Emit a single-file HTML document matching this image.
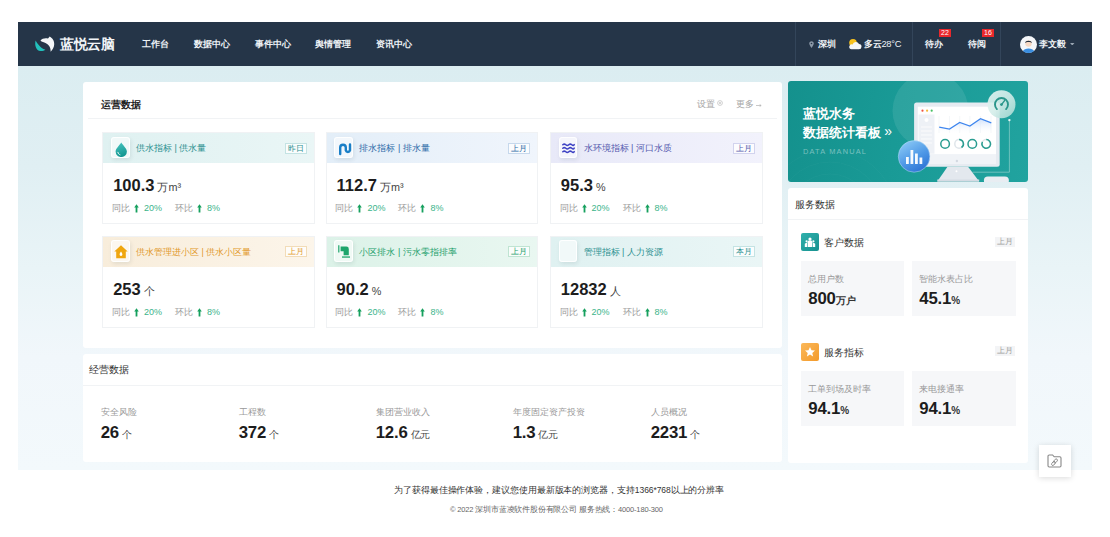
<!DOCTYPE html>
<html><head><meta charset="utf-8">
<style>
*{margin:0;padding:0;box-sizing:border-box}
html,body{width:1110px;height:537px;overflow:hidden;background:#fff;font-family:"Liberation Sans",sans-serif;color:#333}
.a{position:absolute}
#hdr{left:18px;top:22px;width:1074px;height:44px;background:#253548}
.nav{top:37px;font-size:9.3px;font-weight:bold;color:#eef2f6;line-height:12px;white-space:nowrap}
.vd{top:0;width:1px;height:44px;background:#33455a}
#bg{left:18px;top:66px;width:1074px;height:403.5px;background:linear-gradient(180deg,#dbedf1 0%,#e0eff3 25%,#e9f4f7 50%,#f1f7fb 72%,#f3f9fc 100%)}
.card{background:#fff;border-radius:3px}
.sc{width:212.8px;border:1px solid #f0f2f4;background:#fff}
.sch{position:absolute;left:0;top:0;right:0;height:30px}
.ib{position:absolute;left:7.8px;top:3.5px;width:18.6px;height:21.3px;border-radius:3px;background:rgba(255,255,255,.55);border:1px solid rgba(255,255,255,.9);box-shadow:1px 2px 4px rgba(0,40,60,.09)}
.st{position:absolute;left:32.8px;top:10px;font-size:9px;line-height:11px;white-space:nowrap}
.tag{position:absolute;right:7px;top:9.5px;height:11px;width:22px;border:1px solid;font-size:7.5px;line-height:9px;text-align:center;background:rgba(255,255,255,.75)}
.val{position:absolute;left:10px;top:43px;font-size:16.5px;font-weight:bold;color:#1d1d1d;line-height:18px;white-space:nowrap}
.val small{font-size:10.8px;font-weight:normal;color:#444;margin-left:3px}
.cmp{position:absolute;left:8.8px;top:70.3px;width:200px;height:11px;font-size:9px;line-height:11px;color:#999;white-space:nowrap}
.cmp b{font-weight:normal;color:#3bb48a}
.cmp i{font-style:normal;color:#179b5e;font-weight:bold;margin:0 3px 0 5px}
.lbl{font-size:9px;color:#999;line-height:11px;white-space:nowrap}
.big{font-size:16.8px;letter-spacing:-0.2px;font-weight:bold;color:#1d1d1d;line-height:18px;white-space:nowrap}
.big small{font-size:10px;font-weight:normal;color:#444;margin-left:3px}
.sbox{background:#f6f7f9;width:103px;height:55px}
.sbox .lbl{position:absolute;left:7px;top:13px;font-size:9px}
.sbox .big{position:absolute;left:7.3px;top:29.3px}
.sbox .big small{margin-left:0;font-weight:bold;color:#333;font-size:10px}
</style></head>
<body>
<!-- header -->
<div id="hdr" class="a">
  <svg class="a" style="left:16px;top:13px" width="22" height="18" viewBox="0 0 22 18">
    <path d="M1.6 5.5C0.4 10 2 15.8 6.5 16C8.5 16.1 10.3 15.6 11.4 14.8C8.6 14.2 6.5 12.2 5.2 10.5C3.6 8.8 2.4 7.2 1.6 5.5Z" fill="#22c1bd"/>
    <path d="M6.5 5.5C8 3.5 11 3 14 3.5L15.7 1.5C18.5 3 20.5 6 20.2 9.5C20 12.5 18.5 15 16.6 16.8C17 13 15 9.5 11.5 8C9 7 7 6.5 6.5 5.5Z" fill="#f4f6f8"/>
  </svg>
  <div class="a" style="left:42px;top:14.3px;font-size:14px;font-weight:bold;line-height:17px;color:#f2f5f8;letter-spacing:-0.3px">蓝悦云脑</div>
  <div class="a nav" style="left:124px;top:16px">工作台</div>
  <div class="a nav" style="left:176px;top:16px">数据中心</div>
  <div class="a nav" style="left:237px;top:16px">事件中心</div>
  <div class="a nav" style="left:297px;top:16px">舆情管理</div>
  <div class="a nav" style="left:358px;top:16px">资讯中心</div>
  <div class="a vd" style="left:777px"></div>
  <div class="a vd" style="left:894px"></div>
  <div class="a vd" style="left:982px"></div>
  <svg class="a" style="left:790.6px;top:18.5px" width="5" height="7.5" viewBox="0 0 6 9"><path d="M3 0.3C1.4 0.3 0.3 1.5 0.3 3C0.3 4.9 3 8.4 3 8.4S5.7 4.9 5.7 3C5.7 1.5 4.6 0.3 3 0.3Z" fill="#8c99a8"/><circle cx="3" cy="3" r="1" fill="#253548"/></svg>
  <div class="a nav" style="left:799.8px;top:16px">深圳</div>
  <svg class="a" style="left:829.5px;top:15.5px" width="14" height="12" viewBox="0 0 14 12"><circle cx="5" cy="4.8" r="3.8" fill="#f7c21f"/><path d="M3 11.2H10.8A2.6 2.6 0 0 0 11 6A3.4 3.4 0 0 0 4.6 6.4A2.4 2.4 0 0 0 3 11.2Z" fill="#f5f7fa"/></svg>
  <div class="a nav" style="left:845.5px;top:16px">多云<span style="letter-spacing:-0.3px;font-weight:normal">28°C</span></div>
  <div class="a nav" style="left:907px;top:16px">待办</div>
  <div class="a" style="left:921px;top:7px;width:12px;height:8px;background:#e9282c;color:#fff;font-size:7px;line-height:8px;text-align:center">22</div>
  <div class="a nav" style="left:950px;top:16px">待阅</div>
  <div class="a" style="left:964px;top:7px;width:12px;height:8px;background:#e9282c;color:#fff;font-size:7px;line-height:8px;text-align:center">16</div>
  <svg class="a" style="left:1001.5px;top:13.8px" width="17" height="17" viewBox="0 0 17 17"><circle cx="8.5" cy="8.5" r="8.5" fill="#f4f6f9"/><path d="M3 15 C4 11.5 13 11.5 14 15 A8.5 8.5 0 0 1 3 15Z" fill="#3a8ee0"/><circle cx="8.5" cy="7.5" r="3.2" fill="#f7d9c4"/><path d="M5.2 7 C5 4 12 4 11.8 7 C11 5.5 6 5.5 5.2 7Z" fill="#1f2d3d"/></svg>
  <div class="a nav" style="left:1021px;top:16px">李文毅</div>
  <svg class="a" style="left:1052px;top:20.5px" width="4.5" height="2.6" viewBox="0 0 5 3"><path d="M0 0H5L2.5 3Z" fill="#9aa6b3"/></svg>
</div>

<div id="bg" class="a"></div>

<!-- main card -->
<div class="a card" style="left:82.7px;top:81.7px;width:699px;height:265.9px">
  <div class="a" style="left:18.5px;top:16.3px;font-size:10.2px;font-weight:bold;color:#222;line-height:13px">运营数据</div>
  <div class="a lbl" style="left:614.5px;top:17.5px;color:#a6a6a6;font-size:9px">设置</div><svg class="a" style="left:634.5px;top:18px" width="6" height="6" viewBox="0 0 6 6"><circle cx="3" cy="3" r="2.4" fill="none" stroke="#c4c4c4" stroke-width="0.8"/><circle cx="3" cy="3" r="0.9" fill="#c4c4c4"/></svg>
  <div class="a lbl" style="left:653px;top:17.5px;color:#a6a6a6;font-size:9px">更多</div><svg class="a" style="left:673px;top:22px" width="6" height="3" viewBox="0 0 6 3"><path d="M0 1.5H5M3.6 0.4L5.2 1.5L3.6 2.6" fill="none" stroke="#b0b0b0" stroke-width="0.7"/></svg>
  <div class="a" style="left:5px;top:36px;width:689px;height:1px;background:#f1f3f5"></div>
</div>

<!-- subcards -->
<div id="subs">
<div class="a sc" style="left:102.2px;top:132.2px;height:91.5px">
  <div class="sch" style="background:linear-gradient(90deg,#dff1f1,#eaf6f6)"></div>
  <div class="ib"><svg class="a" style="left:3px;top:4px" width="12.5" height="15" viewBox="0 0 12.5 15"><defs><linearGradient id="gdr" x1="0" y1="0" x2="0.3" y2="1"><stop offset="0" stop-color="#4cc6c2"/><stop offset="1" stop-color="#159892"/></linearGradient></defs><path d="M6.25 0.4C4.2 3.6 0.6 6.6 0.6 9.4A5.65 5.65 0 0 0 11.9 9.4C11.9 6.6 8.3 3.6 6.25 0.4Z" fill="url(#gdr)"/><path d="M2.9 10.3C3.2 11.6 3.9 12.4 5 12.8" stroke="#e8f7f6" stroke-width="1" fill="none" stroke-linecap="round"/></svg></div>
  <div class="st" style="color:#2b9090">供水指标 | 供水量</div>
  <div class="tag" style="border-color:#c4e3e3;color:#2b9090">昨日</div>
  <div class="val">100.3<small>万m³</small></div>
  <div class="cmp"><span class="a" style="left:0">同比</span><svg class="a" style="left:22px;top:1px" width="5" height="9" viewBox="0 0 5 9"><path d="M2.5 0.3L4.8 3.4H3.4V8.6H1.6V3.4H0.2Z" fill="#16a05e"/></svg><b class="a" style="left:32px">20%</b><span class="a" style="left:63px">环比</span><svg class="a" style="left:85px;top:1px" width="5" height="9" viewBox="0 0 5 9"><path d="M2.5 0.3L4.8 3.4H3.4V8.6H1.6V3.4H0.2Z" fill="#16a05e"/></svg><b class="a" style="left:95px">8%</b></div>
</div>
<div class="a sc" style="left:325.6px;top:132.2px;height:91.5px">
  <div class="sch" style="background:linear-gradient(90deg,#e3eef8,#f0f5fc)"></div>
  <div class="ib"><svg class="a" style="left:2.5px;top:4px" width="14" height="14" viewBox="0 0 14 14"><path d="M2.2 12V5.6A2.8 2.8 0 0 1 7.8 5.6V8.4A2.2 2.2 0 0 0 12 8.4V2.5" stroke="#1a7fc7" stroke-width="2.4" fill="none" stroke-linecap="round"/></svg></div>
  <div class="st" style="color:#2c6aa8">排水指标 | 排水量</div>
  <div class="tag" style="border-color:#c6d8ec;color:#2c6aa8">上月</div>
  <div class="val">112.7<small>万m³</small></div>
  <div class="cmp"><span class="a" style="left:0">同比</span><svg class="a" style="left:22px;top:1px" width="5" height="9" viewBox="0 0 5 9"><path d="M2.5 0.3L4.8 3.4H3.4V8.6H1.6V3.4H0.2Z" fill="#16a05e"/></svg><b class="a" style="left:32px">20%</b><span class="a" style="left:63px">环比</span><svg class="a" style="left:85px;top:1px" width="5" height="9" viewBox="0 0 5 9"><path d="M2.5 0.3L4.8 3.4H3.4V8.6H1.6V3.4H0.2Z" fill="#16a05e"/></svg><b class="a" style="left:95px">8%</b></div>
</div>
<div class="a sc" style="left:549.8px;top:132.2px;height:91.5px">
  <div class="sch" style="background:linear-gradient(90deg,#e8e9f8,#f2f2fc)"></div>
  <div class="ib"><svg class="a" style="left:2px;top:5.5px" width="13" height="11" viewBox="0 0 13 11"><g stroke="#3f43c4" stroke-width="1.5" fill="none" stroke-linecap="round"><path d="M0.8 1.8Q2.3 0.4 3.8 1.8T6.8 1.8T9.8 1.8T12.2 1.6"/><path d="M0.8 5.3Q2.3 3.9 3.8 5.3T6.8 5.3T9.8 5.3T12.2 5.1"/><path d="M0.8 8.8Q2.3 7.4 3.8 8.8T6.8 8.8T9.8 8.8T12.2 8.6"/></g></svg></div>
  <div class="st" style="color:#5559ae">水环境指标 | 河口水质</div>
  <div class="tag" style="border-color:#d2d3ee;color:#5559ae">上月</div>
  <div class="val">95.3<small>%</small></div>
  <div class="cmp"><span class="a" style="left:0">同比</span><svg class="a" style="left:22px;top:1px" width="5" height="9" viewBox="0 0 5 9"><path d="M2.5 0.3L4.8 3.4H3.4V8.6H1.6V3.4H0.2Z" fill="#16a05e"/></svg><b class="a" style="left:32px">20%</b><span class="a" style="left:63px">环比</span><svg class="a" style="left:85px;top:1px" width="5" height="9" viewBox="0 0 5 9"><path d="M2.5 0.3L4.8 3.4H3.4V8.6H1.6V3.4H0.2Z" fill="#16a05e"/></svg><b class="a" style="left:95px">8%</b></div>
</div>
<div class="a sc" style="left:102.2px;top:235.8px;height:92px">
  <div class="sch" style="background:linear-gradient(90deg,#f8eddb,#fcf5ea)"></div>
  <div class="ib"><svg class="a" style="left:2px;top:3.5px" width="14" height="14" viewBox="0 0 14 14"><path d="M7 0.3L0.3 6.4H2.2V13.3H11.8V6.4H13.7Z" fill="#efa60f"/><path d="M7 6.6C6.3 7.8 5.6 8.6 5.6 9.6A1.4 1.4 0 0 0 8.4 9.6C8.4 8.6 7.7 7.8 7 6.6Z" fill="#fff"/></svg></div>
  <div class="st" style="color:#e29a2d">供水管理进小区 | 供水小区量</div>
  <div class="tag" style="border-color:#f2dcb8;color:#e29a2d">上月</div>
  <div class="val">253<small>个</small></div>
  <div class="cmp"><span class="a" style="left:0">同比</span><svg class="a" style="left:22px;top:1px" width="5" height="9" viewBox="0 0 5 9"><path d="M2.5 0.3L4.8 3.4H3.4V8.6H1.6V3.4H0.2Z" fill="#16a05e"/></svg><b class="a" style="left:32px">20%</b><span class="a" style="left:63px">环比</span><svg class="a" style="left:85px;top:1px" width="5" height="9" viewBox="0 0 5 9"><path d="M2.5 0.3L4.8 3.4H3.4V8.6H1.6V3.4H0.2Z" fill="#16a05e"/></svg><b class="a" style="left:95px">8%</b></div>
</div>
<div class="a sc" style="left:325.6px;top:235.8px;height:92px">
  <div class="sch" style="background:linear-gradient(90deg,#dcf2e8,#e9f7f1)"></div>
  <div class="ib"><svg class="a" style="left:2px;top:3.5px" width="14" height="14" viewBox="0 0 14 14"><path d="M1.8 0.2V7.4" stroke="#1fa56c" stroke-width="1.2"/><path d="M3.6 1.6H9.4A2.4 2.4 0 0 1 11.8 4V10.2H6.6V6.2H3.6Z" fill="#1fa56c"/><path d="M5 11.4H13V12.7H5Z" fill="#1fa56c"/></svg></div>
  <div class="st" style="color:#23a06c">小区排水 | 污水零指排率</div>
  <div class="tag" style="border-color:#bfe4d2;color:#23a06c">上月</div>
  <div class="val">90.2<small>%</small></div>
  <div class="cmp"><span class="a" style="left:0">同比</span><svg class="a" style="left:22px;top:1px" width="5" height="9" viewBox="0 0 5 9"><path d="M2.5 0.3L4.8 3.4H3.4V8.6H1.6V3.4H0.2Z" fill="#16a05e"/></svg><b class="a" style="left:32px">20%</b><span class="a" style="left:63px">环比</span><svg class="a" style="left:85px;top:1px" width="5" height="9" viewBox="0 0 5 9"><path d="M2.5 0.3L4.8 3.4H3.4V8.6H1.6V3.4H0.2Z" fill="#16a05e"/></svg><b class="a" style="left:95px">8%</b></div>
</div>
<div class="a sc" style="left:549.8px;top:235.8px;height:92px">
  <div class="sch" style="background:linear-gradient(90deg,#dff1f1,#eaf6f6)"></div>
  <div class="ib"></div>
  <div class="st" style="color:#2b9090">管理指标 | 人力资源</div>
  <div class="tag" style="border-color:#c4e3e3;color:#2b9090">本月</div>
  <div class="val">12832<small>人</small></div>
  <div class="cmp"><span class="a" style="left:0">同比</span><svg class="a" style="left:22px;top:1px" width="5" height="9" viewBox="0 0 5 9"><path d="M2.5 0.3L4.8 3.4H3.4V8.6H1.6V3.4H0.2Z" fill="#16a05e"/></svg><b class="a" style="left:32px">20%</b><span class="a" style="left:63px">环比</span><svg class="a" style="left:85px;top:1px" width="5" height="9" viewBox="0 0 5 9"><path d="M2.5 0.3L4.8 3.4H3.4V8.6H1.6V3.4H0.2Z" fill="#16a05e"/></svg><b class="a" style="left:95px">8%</b></div>
</div>
</div>

<!-- card 2 -->
<div class="a card" style="left:82.7px;top:353.6px;width:699px;height:108.8px">
  <div class="a" style="left:6px;top:9px;font-size:10px;color:#333;line-height:13px">经营数据</div>
  <div class="a" style="left:0;top:31px;width:699px;height:1px;background:#f1f3f5"></div>
  <div class="a lbl" style="left:18px;top:53.6px">安全风险</div>
  <div class="a big" style="left:18px;top:70.3px">26<small>个</small></div>
  <div class="a lbl" style="left:156px;top:53.6px">工程数</div>
  <div class="a big" style="left:156px;top:70.3px">372<small>个</small></div>
  <div class="a lbl" style="left:293px;top:53.6px">集团营业收入</div>
  <div class="a big" style="left:293px;top:70.3px">12.6<small>亿元</small></div>
  <div class="a lbl" style="left:430px;top:53.6px">年度固定资产投资</div>
  <div class="a big" style="left:430px;top:70.3px">1.3<small>亿元</small></div>
  <div class="a lbl" style="left:568px;top:53.6px">人员概况</div>
  <div class="a big" style="left:568px;top:70.3px">2231<small>个</small></div>
</div>

<!-- banner -->
<div class="a" style="left:788.4px;top:81.3px;width:239.2px;height:100.5px;border-radius:3px;overflow:hidden;background:linear-gradient(100deg,#14918d 0%,#199a96 45%,#21a39f 100%)">
<svg class="a" style="left:0;top:0" width="239.2" height="100.5" viewBox="0 0 239.2 100.5">
  <defs>
    <linearGradient id="bl" x1="0.2" y1="0" x2="0.8" y2="1"><stop offset="0" stop-color="#8ccaf6"/><stop offset="0.55" stop-color="#4d97e6"/><stop offset="1" stop-color="#2a6fd2"/></linearGradient>
    <linearGradient id="gg" x1="0" y1="0" x2="1" y2="1"><stop offset="0" stop-color="#e9f6f4"/><stop offset="0.5" stop-color="#d3ede9"/><stop offset="1" stop-color="#a6d9d2"/></linearGradient>
    <linearGradient id="cf" x1="0" y1="0" x2="0" y2="1"><stop offset="0" stop-color="#cfe0fb"/><stop offset="1" stop-color="#ffffff" stop-opacity="0"/></linearGradient>
  </defs>
  <g fill="none" stroke="#ffffff" stroke-opacity="0.03" stroke-width="1">
    <circle cx="42" cy="135" r="30"/><circle cx="42" cy="135" r="42"/><circle cx="42" cy="135" r="54"/><circle cx="42" cy="135" r="66"/>
  </g>
  <circle cx="142.5" cy="29.7" r="38" fill="#ffffff" fill-opacity="0.09"/>
  <path d="M221.4 39.1V91.2H184.5" stroke="#bfe3df" stroke-opacity="0.7" stroke-width="0.7" fill="none"/>
  <circle cx="221.4" cy="39.1" r="1.2" fill="#e6f5f3"/>
  <!-- stand -->
  <path d="M159.5 85.7H180.1L191.2 100.5H149.3Z" fill="#e3e8ee"/>
  <path d="M149.3 98.5H191.2V100.5H149.3Z" fill="#d5dbe3"/>
  <circle cx="168.5" cy="90.3" r="1" fill="#fff"/>
  <!-- monitor -->
  <rect x="126.1" y="21.4" width="85.6" height="64.3" rx="2.5" fill="#e6ebf1"/>
  <rect x="129.8" y="25.7" width="78.2" height="47.8" fill="#ffffff"/>
  <rect x="129.8" y="73.5" width="78.2" height="9.5" fill="#f0f3f7"/>
  <circle cx="168.9" cy="80" r="1.2" fill="#d3d9e1"/>
  <rect x="130.5" y="33.5" width="16" height="39.2" fill="#eef1f6"/>
  <circle cx="138.5" cy="39.1" r="2" fill="#ffffff"/>
  <g stroke="#ffffff" stroke-width="0.8"><path d="M133 46H144M133 50H144M133 54H144M133 58H144M133 62H144"/></g>
  <circle cx="134.5" cy="29.7" r="1.1" fill="#f0533f"/>
  <circle cx="139.1" cy="29.7" r="1.1" fill="#f5b83a"/>
  <circle cx="143.7" cy="29.7" r="1.1" fill="#46bf63"/>
  <g stroke="#eef1f5" stroke-width="0.6"><path d="M151 35V52M161.5 35V52M171.7 35V52M181.9 35V52M192.5 35V52M203 35V52"/></g>
  <path d="M151.2 46.2L161.5 48L171.7 41.5L181.9 45L192.5 37.7L203.3 41.9V53H151.2Z" fill="url(#cf)"/>
  <polyline points="151.2,46.2 161.5,48 171.7,41.5 181.9,45 192.5,37.7 203.3,41.9" fill="none" stroke="#3f86ee" stroke-width="1.2"/>
  <g fill="none" stroke-width="1.5">
    <circle cx="157.1" cy="62.9" r="4.3" stroke="#2a9d91"/>
    <circle cx="171.1" cy="62.9" r="4.3" stroke="#dfe5ea"/><path d="M171.1 58.6A4.3 4.3 0 0 1 173.5 66.5" stroke="#2a9d91"/>
    <circle cx="184.3" cy="62.9" r="4.3" stroke="#2a9d91"/>
    <circle cx="198.3" cy="62.9" r="4.3" stroke="#dfe5ea"/><path d="M198.3 58.6A4.3 4.3 0 1 1 194.5 60.8" stroke="#2a9d91"/>
  </g>
  <!-- mouse -->
  <rect x="195.9" y="95.5" width="25" height="8" rx="4" fill="#e8edf2"/>
  <!-- gauge -->
  <circle cx="213.5" cy="23.3" r="14" fill="url(#gg)" fill-opacity="0.9"/>
  <path d="M208.9 28.1A6.5 6.5 0 1 1 218.1 28.1" fill="none" stroke="#2a968b" stroke-width="1.9" stroke-linecap="round"/>
  <path d="M213.5 23.6L216.6 19.6" stroke="#2a968b" stroke-width="1.5" stroke-linecap="round"/>
  <circle cx="213.5" cy="23.6" r="1.4" fill="#2a968b"/>
  <!-- bars circle -->
  <circle cx="126.1" cy="75.4" r="15.8" fill="url(#bl)" stroke="#bfe0f7" stroke-opacity="0.6" stroke-width="0.8"/>
  <g fill="#ffffff" fill-opacity="0.95"><rect x="118" y="76" width="2.8" height="7"/><rect x="122.5" y="69" width="2.8" height="14"/><rect x="127" y="72.5" width="2.8" height="10.5"/><rect x="131.5" y="76.5" width="2.8" height="6.5"/></g>
</svg>
  <div class="a" style="left:14.8px;top:25.2px;font-size:13.2px;line-height:16px;color:#fff;font-weight:bold;white-space:nowrap;letter-spacing:0px">蓝悦水务</div>
  <div class="a" style="left:14.8px;top:43.2px;font-size:13.2px;line-height:16px;color:#fff;font-weight:bold;white-space:nowrap;letter-spacing:0px">数据统计看板<span style="font-size:14px;font-weight:normal;position:relative;top:-1px;margin-left:3px">»</span></div>
  <div class="a" style="left:14.5px;top:65.5px;font-size:7.4px;line-height:9px;color:rgba(255,255,255,.42);white-space:nowrap;letter-spacing:1.2px">DATA MANUAL</div>
</div>

<!-- service card -->
<div class="a card" style="left:788px;top:188px;width:240px;height:275px">
  <div class="a" style="left:6.5px;top:10px;font-size:10px;color:#333;line-height:13px">服务数据</div>
  <div class="a" style="left:0;top:31px;width:240px;height:1px;background:#f1f3f5"></div>
  <div class="a" style="left:13px;top:45px;width:18px;height:18px;border-radius:2px;background:linear-gradient(135deg,#2fb0ac,#17918f)">
    <svg class="a" style="left:3px;top:3px" width="12" height="12" viewBox="0 0 12 12"><g fill="#fff"><circle cx="6" cy="3" r="1.6"/><path d="M3.6 6.2A2.4 2 0 0 1 8.4 6.2V11H3.6Z"/><circle cx="2.6" cy="5.3" r="1.1"/><path d="M0.8 7.8A1.8 1.5 0 0 1 3 7V11H0.8Z"/><circle cx="9.4" cy="5.3" r="1.1"/><path d="M11.2 7.8A1.8 1.5 0 0 0 9 7V11H11.2Z"/></g></svg>
  </div>
  <div class="a" style="left:35.5px;top:48px;font-size:10px;color:#333;line-height:13px">客户数据</div>
  <div class="a" style="left:207px;top:49px;width:20px;height:10px;background:#f3f4f6;color:#a0a0a0;font-size:7.5px;line-height:10px;text-align:center">上月</div>
  <div class="a sbox" style="left:13px;top:73px;width:103px"><div class="lbl">总用户数</div><div class="big">800<small>万户</small></div></div>
  <div class="a sbox" style="left:124px;top:73px;width:104px"><div class="lbl">智能水表占比</div><div class="big">45.1<small>%</small></div></div>
  <div class="a" style="left:13px;top:155px;width:18px;height:18px;border-radius:2px;background:linear-gradient(135deg,#fbb85a,#f39a2a)">
    <svg class="a" style="left:3px;top:3px" width="12" height="12" viewBox="0 0 12 12"><path d="M6 1L7.5 4.3L11 4.6L8.3 6.9L9.1 10.4L6 8.6L2.9 10.4L3.7 6.9L1 4.6L4.5 4.3Z" fill="#fff"/></svg>
  </div>
  <div class="a" style="left:35.5px;top:157.5px;font-size:10px;color:#333;line-height:13px">服务指标</div>
  <div class="a" style="left:207px;top:158px;width:20px;height:10px;background:#f3f4f6;color:#a0a0a0;font-size:7.5px;line-height:10px;text-align:center">上月</div>
  <div class="a sbox" style="left:13px;top:183px;width:103px"><div class="lbl">工单到场及时率</div><div class="big">94.1<small>%</small></div></div>
  <div class="a sbox" style="left:124px;top:183px;width:104px"><div class="lbl">来电接通率</div><div class="big">94.1<small>%</small></div></div>
</div>

<!-- float btn -->
<div class="a" style="left:1038.6px;top:444.6px;width:32.8px;height:32px;background:#fff;box-shadow:0 1px 6px rgba(0,0,0,.15)">
<svg class="a" style="left:8.5px;top:9px" width="15" height="14" viewBox="0 0 15 14"><path d="M1 2.2A1.2 1.2 0 0 1 2.2 1H5.6L7.2 2.8H12.8A1.2 1.2 0 0 1 14 4V11.8A1.2 1.2 0 0 1 12.8 13H2.2A1.2 1.2 0 0 1 1 11.8Z" fill="none" stroke="#888" stroke-width="1.1"/><g transform="rotate(-50 7.5 8.2)" fill="none" stroke="#8a8a8a" stroke-width="0.9"><rect x="3.6" y="6.9" width="4.6" height="2.6" rx="1.3"/><rect x="6.8" y="6.9" width="4.6" height="2.6" rx="1.3"/></g></svg>
</div>

<div class="a" style="left:394px;top:485px;font-size:8.5px;letter-spacing:-0.08px;color:#333;line-height:11px;white-space:nowrap">为了获得最佳操作体验，建议您使用最新版本的浏览器，支持1366*768以上的分辨率</div>
<div class="a" style="left:450px;top:505px;font-size:7.5px;letter-spacing:-0.17px;color:#666;line-height:10px;white-space:nowrap">© 2022 深圳市蓝凌软件股份有限公司 服务热线：4000-180-300</div>
</body></html>
